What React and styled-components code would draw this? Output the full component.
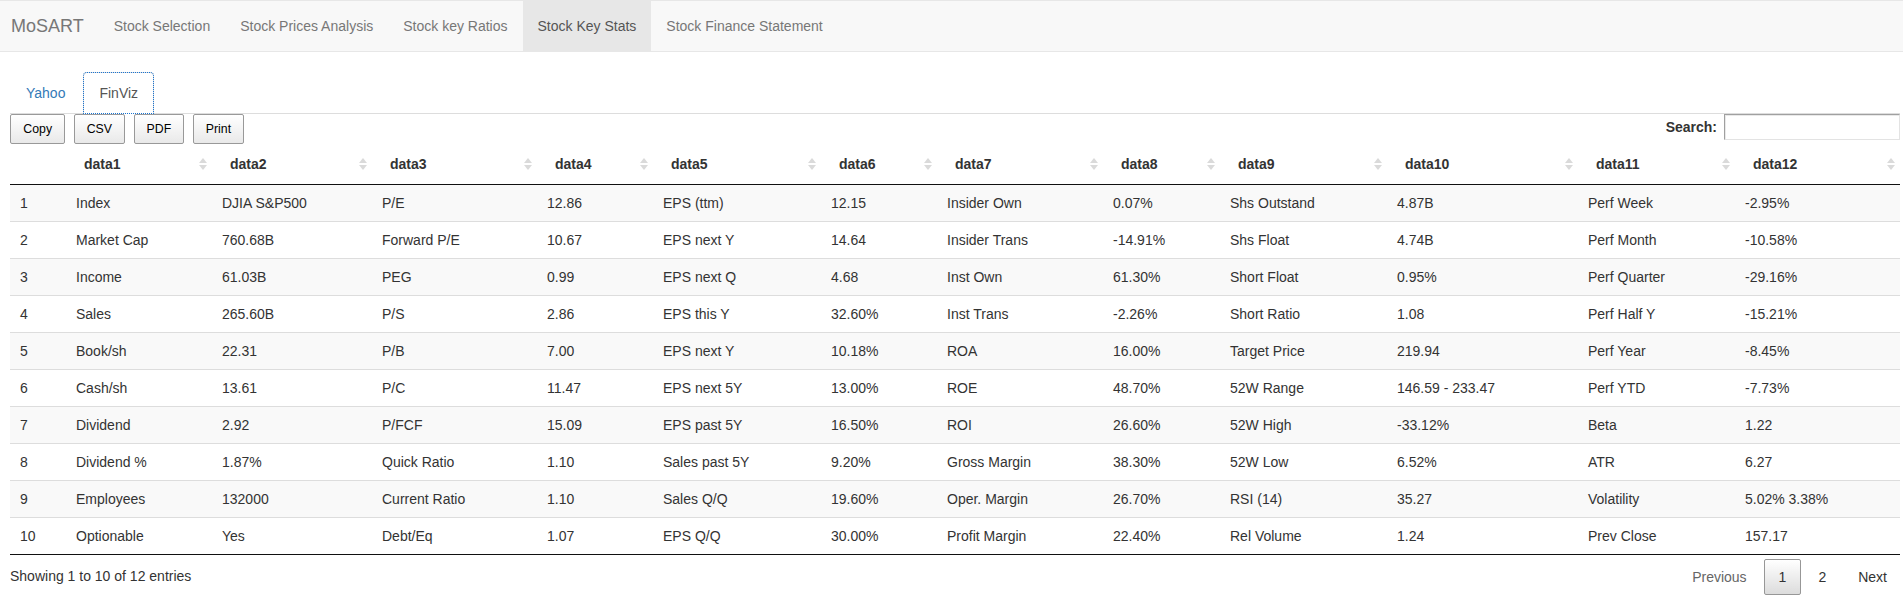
import React from "react";
import styled, { createGlobalStyle } from "styled-components";

const GlobalStyle = createGlobalStyle`
  * { box-sizing: border-box; }
  html, body { margin: 0; padding: 0; background: #fff; }
  body {
    font-family: "Liberation Sans", Arial, Helvetica, sans-serif;
    font-size: 14px;
    line-height: 20px;
    color: #333;
    overflow: hidden;
  }
`;

const Navbar = styled.nav`
  display: flex;
  align-items: stretch;
  height: 52px;
  background: #f8f8f8;
  border-top: 1px solid #e7e7e7;
  border-bottom: 1px solid #e7e7e7;
  margin-bottom: 20px;
`;

const Brand = styled.span`
  padding: 15px 15px 15px 11px;
  font-size: 18px;
  line-height: 20px;
  color: #777;
`;

const NavList = styled.ul`
  display: flex;
  list-style: none;
  margin: 0;
  padding: 0;
`;

const NavItem = styled.li`
  padding: 15px;
  line-height: 20px;
  color: ${(p) => (p.$active ? "#555" : "#777")};
  background: ${(p) => (p.$active ? "#e7e7e7" : "transparent")};
`;

const Content = styled.div`
  padding: 0 3px 0 10px;
`;

const Tabs = styled.ul`
  display: flex;
  list-style: none;
  margin: 0;
  padding: 0;
  border-bottom: 1px solid #ddd;
`;

const Tab = styled.li`
  margin-bottom: -1px;
  margin-right: 2px;
  padding: 10px 15px;
  line-height: 20px;
  border: 1px solid transparent;
  border-radius: 4px 4px 0 0;
  color: ${(p) => (p.$active ? "#555" : "#337ab7")};
  background: ${(p) => (p.$active ? "#fff" : "transparent")};
  ${(p) =>
    p.$active &&
    `
    border-color: #ddd #ddd transparent #ddd;
    outline: 1px dotted #1a75d2;
    outline-offset: -1px;
  `}
`;

const Toolbar = styled.div`
  display: flex;
  justify-content: space-between;
  align-items: flex-start;
`;

const ButtonGroup = styled.div`
  display: flex;
  gap: 8.6px;
  padding-left: 0.3px;
`;

const ToolButton = styled.button`
  font-family: "Liberation Sans", Arial, Helvetica, sans-serif;
  font-size: 12.32px;
  line-height: 16.4px;
  padding: 6px 12px;
  color: #000;
  border: 1px solid #999;
  border-radius: 2px;
  background: linear-gradient(to bottom, #ffffff 0%, #e9e9e9 100%);
  cursor: pointer;
`;

const SearchLabel = styled.label`
  display: flex;
  align-items: center;
  gap: 7px;
  font-weight: bold;
  color: #333;
`;

const SearchInput = styled.input`
  width: 176px;
  height: 26px;
  border: 1px solid;
  border-color: #a0a0a0 #e3e3e3 #e3e3e3 #a0a0a0;
  box-shadow: inset 1px 1px 0 #e9e9e9;
  background: #fff;
  padding: 0 4px;
  font: inherit;
`;

const Table = styled.table`
  width: 1890px;
  table-layout: fixed;
  border-collapse: separate;
  border-spacing: 0;
  border-bottom: 1px solid #111;
`;

const HeadCell = styled.th`
  padding: 10px 5.5px 10px 18px;
  text-align: left;
  font-weight: bold;
  color: #333;
  border-bottom: 1px solid #111;
`;

const HeadInner = styled.div`
  display: flex;
  align-items: center;
  justify-content: space-between;
  height: 20px;
`;

const Row = styled.tr`
  background: ${(p) => (p.$odd ? "#f9f9f9" : "#fff")};
`;

const Cell = styled.td`
  padding: 8px 10px;
  line-height: 20px;
  color: #333;
  white-space: nowrap;
  overflow: hidden;
  tr + tr > & {
    border-top: 1px solid #ddd;
  }
`;

const Footer = styled.div`
  display: flex;
  justify-content: space-between;
  align-items: flex-start;
`;

const Info = styled.div`
  padding-top: 10.5px;
  color: #333;
`;

const Paginate = styled.div`
  display: flex;
  padding-top: 3.5px;
  margin-right: -2px;
`;

const PageButton = styled.span`
  margin-left: 2px;
  padding: 7px 14px;
  min-width: 21px;
  text-align: center;
  line-height: 20px;
  border: 1px solid ${(p) => (p.$current ? "#979797" : "transparent")};
  border-radius: 2px;
  color: ${(p) => (p.$disabled ? "#666" : "#333")};
  background: ${(p) =>
    p.$current ? "linear-gradient(to bottom, #ffffff 0%, #dcdcdc 100%)" : "transparent"};
`;

const SortIcon = () => (
  <svg width="8" height="14" viewBox="0 0 8 14" aria-hidden="true">
    <polygon points="0,6 4,1 8,6" fill="#dadada" />
    <polygon points="0,8 4,13 8,8" fill="#dadada" />
  </svg>
);

const widths = [56, 146, 160, 165, 116, 168, 116, 166, 117, 167, 191, 157, 165];

const rows = [
  ["1", "Index", "DJIA S&P500", "P/E", "12.86", "EPS (ttm)", "12.15", "Insider Own", "0.07%", "Shs Outstand", "4.87B", "Perf Week", "-2.95%"],
  ["2", "Market Cap", "760.68B", "Forward P/E", "10.67", "EPS next Y", "14.64", "Insider Trans", "-14.91%", "Shs Float", "4.74B", "Perf Month", "-10.58%"],
  ["3", "Income", "61.03B", "PEG", "0.99", "EPS next Q", "4.68", "Inst Own", "61.30%", "Short Float", "0.95%", "Perf Quarter", "-29.16%"],
  ["4", "Sales", "265.60B", "P/S", "2.86", "EPS this Y", "32.60%", "Inst Trans", "-2.26%", "Short Ratio", "1.08", "Perf Half Y", "-15.21%"],
  ["5", "Book/sh", "22.31", "P/B", "7.00", "EPS next Y", "10.18%", "ROA", "16.00%", "Target Price", "219.94", "Perf Year", "-8.45%"],
  ["6", "Cash/sh", "13.61", "P/C", "11.47", "EPS next 5Y", "13.00%", "ROE", "48.70%", "52W Range", "146.59 - 233.47", "Perf YTD", "-7.73%"],
  ["7", "Dividend", "2.92", "P/FCF", "15.09", "EPS past 5Y", "16.50%", "ROI", "26.60%", "52W High", "-33.12%", "Beta", "1.22"],
  ["8", "Dividend %", "1.87%", "Quick Ratio", "1.10", "Sales past 5Y", "9.20%", "Gross Margin", "38.30%", "52W Low", "6.52%", "ATR", "6.27"],
  ["9", "Employees", "132000", "Current Ratio", "1.10", "Sales Q/Q", "19.60%", "Oper. Margin", "26.70%", "RSI (14)", "35.27", "Volatility", "5.02% 3.38%"],
  ["10", "Optionable", "Yes", "Debt/Eq", "1.07", "EPS Q/Q", "30.00%", "Profit Margin", "22.40%", "Rel Volume", "1.24", "Prev Close", "157.17"],
];

const navItems = [
  "Stock Selection",
  "Stock Prices Analysis",
  "Stock key Ratios",
  "Stock Key Stats",
  "Stock Finance Statement",
];

export default function App() {
  return (
    <>
      <GlobalStyle />
      <Navbar>
        <Brand>MoSART</Brand>
        <NavList>
          {navItems.map((n) => (
            <NavItem key={n} $active={n === "Stock Key Stats"}>
              {n}
            </NavItem>
          ))}
        </NavList>
      </Navbar>
      <Content>
        <Tabs>
          <Tab>Yahoo</Tab>
          <Tab $active>FinViz</Tab>
        </Tabs>
        <Toolbar>
          <ButtonGroup>
            <ToolButton>Copy</ToolButton>
            <ToolButton>CSV</ToolButton>
            <ToolButton>PDF</ToolButton>
            <ToolButton>Print</ToolButton>
          </ButtonGroup>
          <SearchLabel>
            Search:
            <SearchInput type="search" />
          </SearchLabel>
        </Toolbar>
        <Table>
          <colgroup>
            {widths.map((w, i) => (
              <col key={i} style={{ width: w }} />
            ))}
          </colgroup>
          <thead>
            <tr>
              <HeadCell />
              {Array.from({ length: 12 }, (_, i) => (
                <HeadCell key={i}>
                  <HeadInner>
                    <span>data{i + 1}</span>
                    <SortIcon />
                  </HeadInner>
                </HeadCell>
              ))}
            </tr>
          </thead>
          <tbody>
            {rows.map((r, i) => (
              <Row key={i} $odd={i % 2 === 0}>
                {r.map((c, j) => (
                  <Cell key={j}>{c}</Cell>
                ))}
              </Row>
            ))}
          </tbody>
        </Table>
        <Footer>
          <Info>Showing 1 to 10 of 12 entries</Info>
          <Paginate>
            <PageButton $disabled>Previous</PageButton>
            <PageButton $current>1</PageButton>
            <PageButton>2</PageButton>
            <PageButton>Next</PageButton>
          </Paginate>
        </Footer>
      </Content>
    </>
  );
}
